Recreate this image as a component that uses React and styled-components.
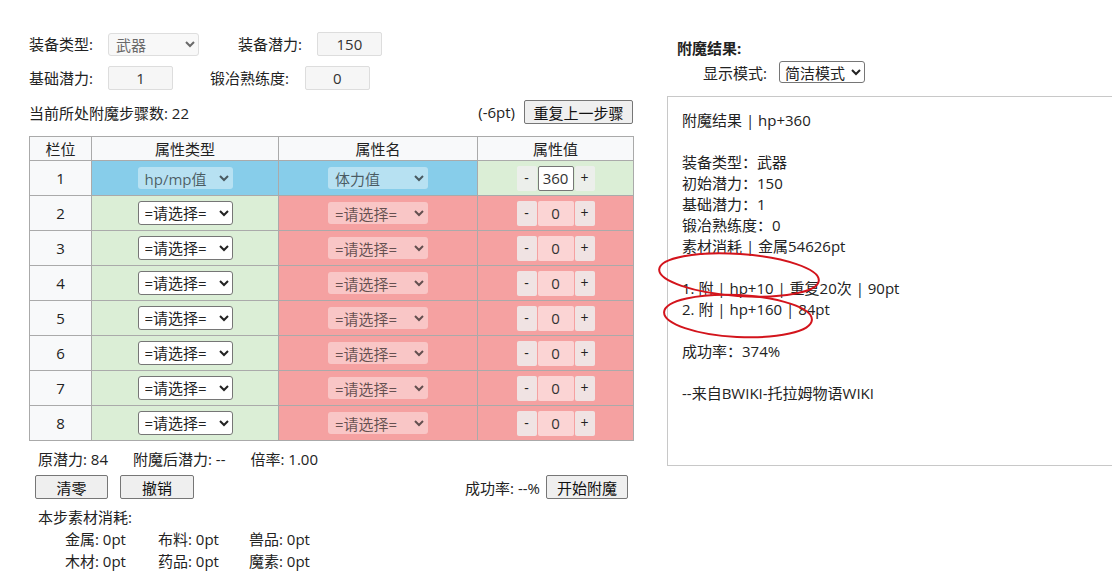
import React from 'react'
import styled, { createGlobalStyle } from 'styled-components'

const GlobalStyle = createGlobalStyle`
  html, body {
    margin: 0;
    padding: 0;
    overflow: hidden;
    background: #fff;
  }
  body {
    font-family: "Open Sans", "Noto Sans CJK SC", sans-serif;
    font-size: 15px;
    color: #222;
  }
`

const Page = styled.div`
  display: flex;
  align-items: flex-start;
  padding: 32px 0 0 29px;
  width: 1200px;
`

const LeftPanel = styled.div`
  width: 604px;
  flex-shrink: 0;
`

const FormRow = styled.div`
  display: flex;
  align-items: center;
  height: 24px;
  margin-bottom: 10px;
`

const Label = styled.span`
  margin-left: ${p => p.$gap || 0}px;
  line-height: 24px;
  white-space: nowrap;
`

const FieldSelect = styled.select`
  margin-left: 15px;
  width: ${p => p.$w || 91}px;
  height: 23px;
  font: inherit;
  font-size: 15px;
  color: #6a6a6a;
  background: #f8f8f8;
  border: 1px solid #dedede;
  border-radius: 3px;
  padding: 0 3px;
`

const FieldInput = styled.input`
  margin-left: ${p => p.$gap || 15}px;
  width: 65px;
  height: 24px;
  box-sizing: border-box;
  font: inherit;
  font-size: 15px;
  text-align: center;
  color: #333;
  background: #f6f6f6;
  border: 1px solid #ddd;
  border-radius: 2px;
`

const StepRow = styled.div`
  display: flex;
  align-items: center;
  justify-content: space-between;
  height: 24px;
  margin-bottom: 12px;
`

const StepRight = styled.div`
  display: flex;
  align-items: center;
  gap: 9px;
`

const Button = styled.button`
  height: 24px;
  width: ${p => p.$w}px;
  margin-left: ${p => p.$ml || 0}px;
  padding: 0;
  font: inherit;
  font-size: 15px;
  color: #111;
  background: #efefef;
  border: 1px solid #767676;
  border-radius: 2px;
`

const Table = styled.table`
  width: 605px;
  border-collapse: collapse;
  table-layout: fixed;
  & th, & td {
    border: 1px solid #aaa;
    text-align: center;
    padding: 0;
  }
`

const HeadCell = styled.th`
  width: ${p => (p.$w ? `${p.$w}px` : 'auto')};
  height: 23px;
  font-weight: normal;
  background: #f8f9fa;
`

const Cell = styled.td`
  height: 34px;
  background: ${p => p.$bg};
`

const CellSelect = styled.select`
  width: ${p => p.$w}px;
  height: ${p => (p.$muted ? 22 : 24)}px;
  font: inherit;
  font-size: 15px;
  color: ${p => (p.$muted ? 'rgba(0,0,0,0.6)' : '#222')};
  background: ${p => (p.$muted ? 'rgba(255,255,255,0.4)' : '#fff')};
  border: 1px solid ${p => (p.$muted ? 'transparent' : '#767676')};
  border-radius: 3px;
  padding: 0 2px;
  vertical-align: middle;
`

const Stepper = styled.div`
  display: inline-flex;
  align-items: center;
  height: 25px;
  vertical-align: middle;
`

const StepBtn = styled.span`
  width: 20px;
  height: 25px;
  line-height: 24px;
  font-size: 14px;
  color: #222;
  background: rgba(239, 239, 239, 0.85);
  border-radius: 2px;
`

const ValueBox = styled.span`
  box-sizing: border-box;
  width: 36px;
  height: 25px;
  line-height: 23px;
  margin: 0 1px;
  font-size: 15px;
  color: #333;
  background: ${p => (p.$active ? '#fff' : 'rgba(255,255,255,0.55)')};
  border: 1px solid ${p => (p.$active ? '#767676' : 'transparent')};
  border-radius: 2px;
`

const InfoLine = styled.div`
  display: flex;
  gap: 25px;
  line-height: 22px;
  margin-top: 7px;
  padding-left: 9px;
  white-space: pre;
`

const ActionRow = styled.div`
  display: flex;
  align-items: center;
  height: 24px;
  margin-top: 5px;
  padding: 0 5px 0 6px;
  width: 593px;
`

const Spacer = styled.div`
  flex: 1;
`

const RateText = styled.span`
  margin-right: 6px;
`

const CostTitle = styled.div`
  line-height: 22px;
  margin-top: 7px;
  padding-left: 9px;
`

const CostGrid = styled.div`
  display: grid;
  grid-template-columns: 93px 91px auto;
  padding-left: 36px;
  line-height: 22px;
`

const RightPanel = styled.div`
  margin-left: 34px;
  width: 460px;
  flex-shrink: 0;
  padding-top: 6px;
`

const Heading = styled.div`
  font-weight: bold;
  padding-left: 10px;
  line-height: 20px;
`

const ModeRow = styled.div`
  display: flex;
  align-items: center;
  padding-left: 36px;
  margin-top: 3px;
`

const ModeSelect = styled.select`
  margin-left: 12px;
  width: 86px;
  height: 22px;
  font: inherit;
  font-size: 15px;
  color: #222;
  background: #fff;
  border: 1px solid #767676;
  border-radius: 3px;
  padding: 0 1px;
`

const ResultBox = styled.div`
  position: relative;
  margin-top: 13px;
  height: 370px;
  box-sizing: border-box;
  border: 1px solid #c8c8c8;
  padding: 13px 14px;
`

const ResultLine = styled.div`
  line-height: 21px;
  height: 21px;
  white-space: pre;
  color: #222;
`

const Marks = styled.svg`
  position: absolute;
  left: 0;
  top: 0;
  overflow: visible;
  pointer-events: none;
`

const rows = [
  { n: 1, type: 'hp/mp值', name: '体力值', value: 360, done: true },
  ...[2, 3, 4, 5, 6, 7, 8].map(n => ({ n, type: '=请选择=', name: '=请选择=', value: 0 }))
]

const resultLines = [
  '附魔结果 | hp+360',
  '',
  '装备类型：武器',
  '初始潜力：150',
  '基础潜力：1',
  '锻冶熟练度：0',
  '素材消耗 | 金属54626pt',
  '',
  '1. 附 | hp+10 | 重复20次 | 90pt',
  '2. 附 | hp+160 | 84pt',
  '',
  '成功率：374%',
  '',
  '--来自BWIKI-托拉姆物语WIKI'
]

const SKY = '#87cdea'
const GREEN = '#dbeed6'
const RED = '#f5a1a1'

export default function App() {
  return (
    <Page>
      <GlobalStyle />
      <LeftPanel>
        <FormRow>
          <Label>装备类型:</Label>
          <FieldSelect defaultValue="武器">
            <option>武器</option>
          </FieldSelect>
          <Label $gap={39}>装备潜力:</Label>
          <FieldInput readOnly value="150" />
        </FormRow>
        <FormRow>
          <Label>基础潜力:</Label>
          <FieldInput readOnly value="1" />
          <Label $gap={37}>锻冶熟练度:</Label>
          <FieldInput readOnly value="0" $gap={16} />
        </FormRow>
        <StepRow>
          <span>当前所处附魔步骤数: 22</span>
          <StepRight>
            <span>(-6pt)</span>
            <Button $w={109}>重复上一步骤</Button>
          </StepRight>
        </StepRow>

        <Table>
          <thead>
            <tr>
              <HeadCell $w={61}>栏位</HeadCell>
              <HeadCell $w={186}>属性类型</HeadCell>
              <HeadCell $w={198}>属性名</HeadCell>
              <HeadCell>属性值</HeadCell>
            </tr>
          </thead>
          <tbody>
            {rows.map(r => (
              <tr key={r.n}>
                <Cell $bg="#f8f9fa">{r.n}</Cell>
                <Cell $bg={r.done ? SKY : GREEN}>
                  <CellSelect $w={95} $muted={r.done} defaultValue={r.type}>
                    <option>{r.type}</option>
                  </CellSelect>
                </Cell>
                <Cell $bg={r.done ? SKY : RED}>
                  <CellSelect $w={100} $muted defaultValue={r.name}>
                    <option>{r.name}</option>
                  </CellSelect>
                </Cell>
                <Cell $bg={r.done ? GREEN : RED}>
                  <Stepper>
                    <StepBtn>-</StepBtn>
                    <ValueBox $active={r.done}>{r.value}</ValueBox>
                    <StepBtn>+</StepBtn>
                  </Stepper>
                </Cell>
              </tr>
            ))}
          </tbody>
        </Table>

        <InfoLine>
          <span>原潜力: 84</span>
          <span>附魔后潜力: --</span>
          <span>倍率: 1.00</span>
        </InfoLine>
        <ActionRow>
          <Button $w={73}>清零</Button>
          <Button $w={74} $ml={12}>撤销</Button>
          <Spacer />
          <RateText>成功率: --%</RateText>
          <Button $w={82}>开始附魔</Button>
        </ActionRow>
        <CostTitle>本步素材消耗:</CostTitle>
        <CostGrid>
          <span>金属: 0pt</span>
          <span>布料: 0pt</span>
          <span>兽品: 0pt</span>
          <span>木材: 0pt</span>
          <span>药品: 0pt</span>
          <span>魔素: 0pt</span>
        </CostGrid>
      </LeftPanel>

      <RightPanel>
        <Heading>附魔结果:</Heading>
        <ModeRow>
          <span>显示模式:</span>
          <ModeSelect defaultValue="简洁模式">
            <option>简洁模式</option>
            <option>详细模式</option>
          </ModeSelect>
        </ModeRow>
        <ResultBox>
          {resultLines.map((line, i) => (
            <ResultLine key={i}>{line}</ResultLine>
          ))}
          <Marks width="200" height="260" viewBox="0 0 200 260">
            <ellipse cx="71" cy="178" rx="80" ry="21" fill="none" stroke="#d3141c" strokeWidth="2" transform="rotate(4 71 178)" />
            <ellipse cx="70" cy="219" rx="74" ry="21" fill="none" stroke="#d3141c" strokeWidth="2" transform="rotate(3 70 219)" />
          </Marks>
        </ResultBox>
      </RightPanel>
    </Page>
  )
}
